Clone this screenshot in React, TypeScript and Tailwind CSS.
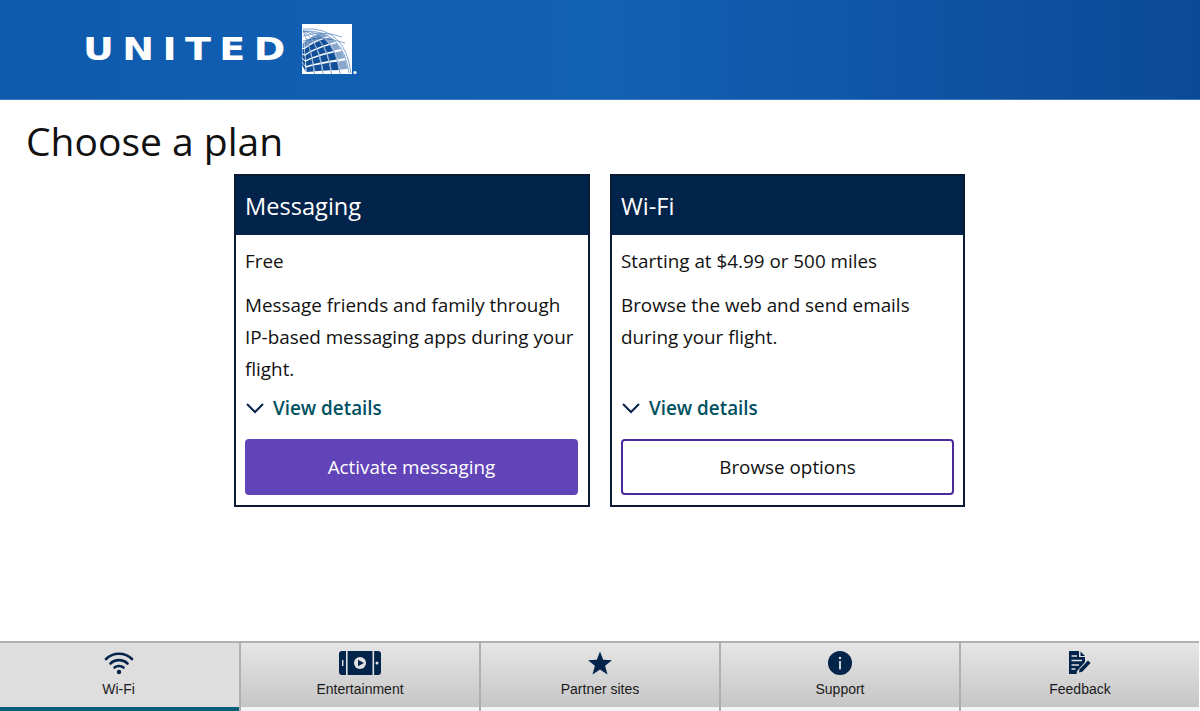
import React from "react";

type P = [number, number];
const pole: P = [1, 7];
const meridians: { c: P; e: P }[] = [
  { c: [41, 5], e: [47, 49] },
  { c: [33, 8], e: [38, 50] },
  { c: [25, 12], e: [29.5, 50] },
  { c: [17, 17], e: [21, 50] },
  { c: [9, 23], e: [12.5, 50] },
  { c: [3, 30], e: [4, 50] },
  { c: [0, 32], e: [0, 42] },
];
const at = (m: { c: P; e: P }, t: number): P => {
  const u = 1 - t;
  return [
    u * u * pole[0] + 2 * u * t * m.c[0] + t * t * m.e[0],
    u * u * pole[1] + 2 * u * t * m.c[1] + t * t * m.e[1],
  ];
};
const mix = (a: P, b: P, k: number): P => [a[0] + (b[0] - a[0]) * k, a[1] + (b[1] - a[1]) * k];
const rows = [0.26, 0.41, 0.56, 0.7, 0.84, 0.98];
const cells: { d: string; fade: number }[] = [];
for (let i = 0; i < meridians.length - 1; i++) {
  for (let j = 0; j < rows.length - 1; j++) {
    const t0 = rows[j];
    const t1 = rows[j + 1] - 0.03;
    const inner = 0.08;
    const outer = 0.92;
    const pts = [
      mix(at(meridians[i], t0), at(meridians[i + 1], t0), inner),
      mix(at(meridians[i], t1), at(meridians[i + 1], t1), inner),
      mix(at(meridians[i], t1), at(meridians[i + 1], t1), outer),
      mix(at(meridians[i], t0), at(meridians[i + 1], t0), outer),
    ];
    cells.push({
      d: "M" + pts.map((p) => p[0].toFixed(1) + " " + p[1].toFixed(1)).join("L") + "Z",
      fade: i === 0 ? 0.5 : j === 0 ? 0.65 : 1,
    });
  }
}

const Globe = () => (
  <svg width="56" height="52" viewBox="0 0 56 52" className="block">
    <rect x="0" y="0" width="50" height="50" fill="#fff" />
    <g fill="none" stroke="#1559a8" strokeWidth="0.7" opacity="0.75">
      {meridians.slice(0, 5).map((m, i) => (
        <path key={i} d={`M${pole[0]} ${pole[1]} Q${m.c[0]} ${m.c[1]} ${m.e[0]} ${m.e[1]}`} />
      ))}
      <path d="M1 5 Q43 2 49 49" />
      <path d="M1 12 Q20 6 40 13" />
      <path d="M1 17 Q20 11 43 19" />
    </g>
    {cells.map((c, i) => (
      <path key={i} d={c.d} fill="#114f98" opacity={c.fade} />
    ))}
    <circle cx="53" cy="48.5" r="1.6" fill="#fff" />
  </svg>
);

const Chevron = () => (
  <svg width="20" height="12" viewBox="0 0 20 12" fill="none" stroke="#02234a" strokeWidth="2">
    <path d="M2 2 L10 10 L18 2" />
  </svg>
);

const Card = ({ title, price, desc, button, primary }: { title: string; price: string; desc: React.ReactNode; button: string; primary?: boolean }) => (
  <div className={primary ? "flex h-[333px] w-[356px] flex-col border-2 border-[#0a1a33] bg-white" : "flex h-[333px] w-[355px] flex-col border-2 border-[#0a1a33] bg-white"}>
    <div className="flex h-[59px] items-center bg-[#02234a] pl-[9px] pt-[3px] text-[23.6px] font-medium text-white">{title}</div>
    <div className={primary ? "flex flex-1 flex-col pr-[10px] pl-[9px]" : "flex flex-1 flex-col pr-[9px] pl-[9px]"}>
      <div className="mt-[10px] text-[18.85px] leading-[32px] text-[#111]">{price}</div>
      <div className="mt-[12px] h-[96px] text-[18.85px] leading-[32px] text-[#111]">{desc}</div>
      <div className="mt-[7px] flex h-[32px] items-center gap-[8px] text-[18.85px] font-semibold text-[#00505f]">
        <Chevron />
        <span>View details</span>
      </div>
      <div
        className={
          primary
            ? "mt-[15px] flex h-[56px] items-center justify-center rounded-[4px] bg-[#6244b9] text-[18.85px] font-medium text-white"
            : "mt-[15px] flex h-[56px] items-center justify-center rounded-[4px] border-2 border-[#4b2a9e] bg-white text-[18.85px] text-[#111]"
        }
      >
        {button}
      </div>
    </div>
  </div>
);

const WifiIcon = () => (
  <svg width="30" height="24" viewBox="0 0 30 24" fill="none" stroke="#02234a" strokeWidth="2.6" strokeLinecap="round">
    <path d="M2 8 C9 1 21 1 28 8" />
    <path d="M6.5 12.5 C11 8 19 8 23.5 12.5" />
    <path d="M10.5 16.5 C13 14.5 17 14.5 19.5 16.5" />
    <circle cx="15" cy="21" r="2.2" fill="#02234a" stroke="none" />
  </svg>
);

const EntIcon = () => (
  <svg width="42" height="24" viewBox="0 0 42 24">
    <rect x="0" y="0" width="42" height="24" rx="3" fill="#02234a" />
    <rect x="7" y="-1" width="1.6" height="26" fill="#e2e2e2" />
    <rect x="33.5" y="-1" width="1.6" height="26" fill="#e2e2e2" />
    <rect x="3" y="9" width="1.4" height="6" fill="#e2e2e2" />
    <circle cx="38" cy="12" r="1.5" fill="#e2e2e2" />
    <circle cx="21" cy="12" r="6" fill="#e2e2e2" />
    <path d="M19 8.8 L25 12 L19 15.2 Z" fill="#02234a" />
  </svg>
);

const StarIcon = () => (
  <svg width="26" height="24" viewBox="0 0 26 24">
    <path d="M13 0.5 L16.2 8.8 L25 9.2 L18.1 14.8 L20.5 23.5 L13 18.6 L5.5 23.5 L7.9 14.8 L1 9.2 L9.8 8.8 Z" fill="#02234a" />
  </svg>
);

const InfoIcon = () => (
  <svg width="24" height="24" viewBox="0 0 24 24">
    <circle cx="12" cy="12" r="12" fill="#02234a" />
    <rect x="11.1" y="10" width="1.8" height="8.5" fill="#e2e2e2" />
    <circle cx="12" cy="7" r="1.2" fill="#e2e2e2" />
  </svg>
);

const FeedbackIcon = () => (
  <svg width="24" height="24" viewBox="0 0 24 24">
    <path d="M1 0 H11 V6 H17 V11 L9 20 L8.6 23 H1 Z" fill="#02234a" />
    <path d="M12.5 0.5 L17 5 H12.5 Z" fill="#02234a" />
    <g stroke="#e2e2e2" strokeWidth="1.5">
      <path d="M3.5 5 H9" />
      <path d="M3.5 9.5 H14" />
      <path d="M3.5 14 H11" />
      <path d="M3.5 18 H7.5" />
    </g>
    <path d="M11 21.5 L11.6 18.2 L20 9.5 L22.6 12 L14.2 20.8 Z" fill="#02234a" />
  </svg>
);

const tabs = [
  { label: "Wi-Fi", icon: <WifiIcon /> },
  { label: "Entertainment", icon: <EntIcon /> },
  { label: "Partner sites", icon: <StarIcon /> },
  { label: "Support", icon: <InfoIcon /> },
  { label: "Feedback", icon: <FeedbackIcon /> },
];

export default function App() {
  return (
    <div className="flex h-[711px] w-[1200px] flex-col overflow-hidden bg-white font-['Open_Sans',sans-serif]">
      <header className="flex h-[100px] items-start border-b border-[#3b78c4] bg-gradient-to-r from-[#0e5bae] via-[#1260b4] to-[#0b4a96] pl-[83px] pt-[24px]">
        <span className="mt-[2px] w-[208px] origin-left scale-y-[0.86] font-['DejaVu_Sans',sans-serif] text-[38px] leading-[46px] font-bold tracking-[8.4px] text-white">UNITED</span>
        <div className="ml-[11px]">
          <Globe />
        </div>
      </header>
      <main className="flex-1">
        <h1 className="pl-[26px] pt-[16px] text-[39px] leading-[50px] text-[#111]">Choose a plan</h1>
        <div className="mt-[8px] flex gap-[20px] pl-[234px]">
          <Card title="Messaging" price="Free" desc="Message friends and family through IP-based messaging apps during your flight." button="Activate messaging" primary />
          <Card title="Wi-Fi" price="Starting at $4.99 or 500 miles" desc="Browse the web and send emails during your flight." button="Browse options" />
        </div>
      </main>
      <nav className="flex h-[70px] font-['Liberation_Sans',sans-serif]">
        {tabs.map((t, i) => (
          <div
            key={t.label}
            className={
              i === 0
                ? "flex w-[239px] flex-col items-center border-t-2 border-[#b0b0b0] border-b-4 border-b-[#0b6079] bg-[#dedede] pr-[2px]"
                : "flex w-[240px] flex-col border-t-2 border-l-2 border-[#b0b0b0] bg-[#f4f4f4]"
            }
          >
            <div className={i === 0 ? "flex w-full flex-1 flex-col items-center" : "flex h-[64px] w-full flex-col items-center bg-gradient-to-b from-[#e6e6e6] to-[#c6c6c6]"}>
              <div className="mt-[7px] flex h-[26px] items-center justify-center">{t.icon}</div>
              <div className="mt-[4px] text-[14px] leading-[18px] text-[#1a1a1a]">{t.label}</div>
            </div>
          </div>
        ))}
      </nav>
    </div>
  );
}
